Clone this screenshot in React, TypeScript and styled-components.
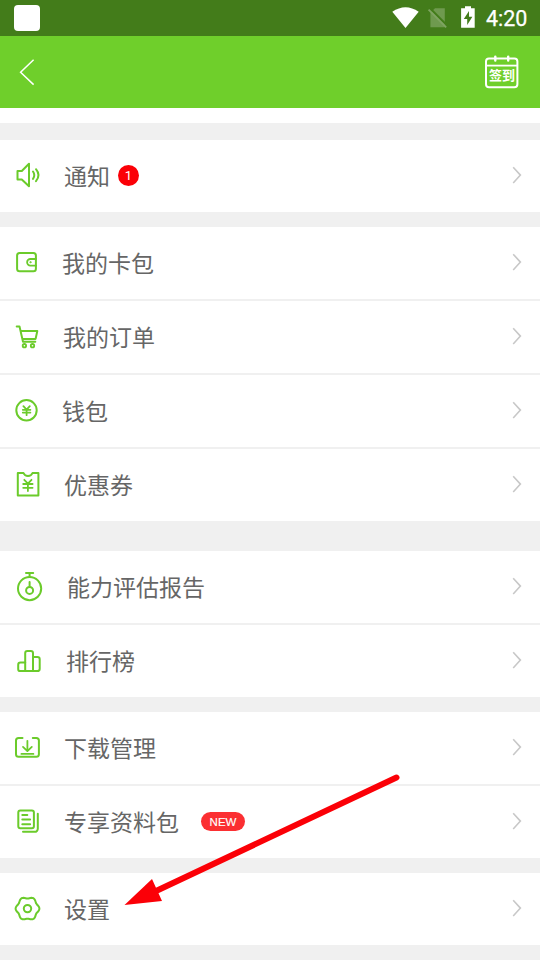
import React from 'react';
import styled, { createGlobalStyle } from 'styled-components';

const GlobalStyle = createGlobalStyle`
  * { box-sizing: border-box; }
  body {
    margin: 0;
    background: #f0f0f0;
    font-family: "Noto Sans CJK SC", sans-serif;
  }
`;

const Screen = styled.div`
  position: relative;
  display: flex;
  flex-direction: column;
  width: 540px;
  height: 960px;
  overflow: hidden;
  background: #f0f0f0;
`;

const StatusBar = styled.div`
  display: flex;
  align-items: center;
  justify-content: space-between;
  flex: none;
  height: 36px;
  padding: 0 12px 0 14px;
  background: #437c1a;
`;

const AppBadge = styled.div`
  width: 26px;
  height: 26px;
  border-radius: 4px;
  background: #fff;
`;

const StatusGroup = styled.div`
  display: flex;
  align-items: center;
  height: 36px;
`;

const Clock = styled.span`
  width: 42px;
  margin-left: 10px;
  padding-top: 2px;
  font: 400 21.5px/34px Roboto, sans-serif;
  color: #fff;
  -webkit-text-stroke: 0.25px #fff;
  white-space: nowrap;
`;

const Header = styled.header`
  display: flex;
  align-items: center;
  justify-content: space-between;
  flex: none;
  height: 72px;
  padding: 0 20px 0 18px;
  background: #6fcf2b;
`;

const CheckIn = styled.div`
  position: relative;
  width: 36px;
  height: 36px;
`;

const CheckInText = styled.span`
  position: absolute;
  left: 5px;
  top: 13px;
  width: 26px;
  font-size: 13px;
  font-weight: 700;
  line-height: 16px;
  color: #fff;
  white-space: nowrap;
`;

const Strip = styled.div`
  flex: none;
  height: 15px;
  background: #fff;
`;

const Group = styled.section<{ $gap: number }>`
  display: flex;
  flex-direction: column;
  flex: none;
  gap: 2px;
  margin-top: ${(p) => p.$gap}px;
`;

const Row = styled.div`
  display: flex;
  align-items: center;
  height: 72px;
  padding-right: 16px;
  background: #fff;
`;

const RowIcon = styled.svg`
  flex: none;
  display: block;
  width: 50px;
  height: 72px;
  fill: none;
  stroke: #6bcb2b;
  stroke-width: 2;
  stroke-linecap: round;
  stroke-linejoin: round;
`;

const Label = styled.span<{ $indent: number }>`
  margin-left: ${(p) => p.$indent}px;
  padding-bottom: 3px;
  font-size: 23px;
  line-height: 34px;
  font-weight: 400;
  color: #666;
  white-space: nowrap;
`;

const CountBadge = styled.span`
  width: 21px;
  height: 21px;
  margin: 0 0 1px 8px;
  border-radius: 50%;
  background: #fb0007;
  color: #fff;
  font: 400 13px/22px Roboto, sans-serif;
  text-align: center;
`;

const NewBadge = styled.span`
  width: 44px;
  height: 19px;
  margin: 0 0 1px 22px;
  border-radius: 10px;
  background: #fb2f32;
  color: #fff;
  font: 400 11.5px/20px "Liberation Sans", sans-serif;
  -webkit-text-stroke: 0.15px #fff;
  text-align: center;
`;

const Chevron = styled.svg`
  flex: none;
  width: 12px;
  height: 20px;
  margin: 0 0 2px auto;
  fill: none;
  stroke: #c8c8c8;
  stroke-width: 1.6;
`;

const Pointer = styled.svg`
  position: absolute;
  left: 120px;
  top: 770px;
  width: 284px;
  height: 140px;
  pointer-events: none;
`;

// Six-lobed gear outline with one lobe pointing left and one pointing right.
const gearPath =
  Array.from({ length: 72 }, (_, i) => {
    const angle = (i * Math.PI) / 36;
    const radius = 11 + 0.9 * Math.cos(6 * angle);
    const x = 27.5 + radius * Math.cos(angle);
    const y = 35.6 + radius * Math.sin(angle);
    return `${i ? 'L' : 'M'}${x.toFixed(2)} ${y.toFixed(2)}`;
  }).join('') + 'z';

const icons = {
  notice: (
    <>
      <path d="M17.5 31h4.3l7.2-7.2v22.4l-7.2-6.7h-4.3z" />
      <path d="M33 31.5q2.6 3.8 0 7.4M36 29.2q5 6 0 12" />
    </>
  ),
  card: (
    <>
      <rect x="17.1" y="26" width="18.8" height="18.2" rx="2.5" />
      <path d="M36 32h-5.6a3.3 3.3 0 0 0 0 6.6H36" strokeWidth="1.8" />
      <circle cx="30.4" cy="35.2" r=".6" strokeWidth="1" />
    </>
  ),
  order: (
    <>
      <path d="M16.7 25.4h2.8L23 40.8h12.3M20.7 30h16.6l-1.7 7.9H22.4" />
      <circle cx="24.4" cy="44.7" r="1.7" strokeWidth="1.8" />
      <circle cx="32.5" cy="44.7" r="1.7" strokeWidth="1.8" />
    </>
  ),
  wallet: (
    <>
      <circle cx="26.5" cy="35.3" r="10.2" />
      <path d="M23.4 31.2l3.2 3.4 3.2-3.4M22.8 34.8h7.6M22.8 37.6h7.6M26.6 34.8v5.4" strokeWidth="1.8" />
    </>
  ),
  coupon: (
    <>
      <path d="M17.8 24h5.7q1.2 3 4.5 3t4.5-3h5.9v22.6H17.8z" />
      <path d="M24.3 30.8l3.6 3.8 3.6-3.8M23.2 35h9.4M23.2 38.8h9.4M27.9 35v7" strokeWidth="1.8" />
    </>
  ),
  report: (
    <>
      <circle cx="29.6" cy="37.6" r="11.6" />
      <circle cx="29.6" cy="39.4" r="3.5" />
      <path d="M26 22.1h7.2M29.6 22.5v3M29.6 31v4.5" />
    </>
  ),
  rank: (
    <>
      <path d="M25.2 46.1v-18a2.2 2.2 0 0 1 2.2-2.2h3.4a2.2 2.2 0 0 1 2.2 2.2v18" />
      <path d="M25.2 37.6h-4.7a2.3 2.3 0 0 0-2.3 2.3v4a2.2 2.2 0 0 0 2.2 2.2h17a2.3 2.3 0 0 0 2.3-2.2V34.2a2.3 2.3 0 0 0-2.3-2.3H33" />
    </>
  ),
  download: (
    <>
      <path d="M22.5 25.9h-3.9a2.6 2.6 0 0 0-2.6 2.6v13.7a2.6 2.6 0 0 0 2.6 2.6h17.7a2.6 2.6 0 0 0 2.6-2.6V28.5a2.6 2.6 0 0 0-2.6-2.6h-3.5" />
      <path d="M27.4 28.8v10M23 34.9l4.4 4.2 4.4-4.2M21.4 41.9h12" strokeWidth="1.8" />
    </>
  ),
  docs: (
    <>
      <rect x="18.3" y="24.6" width="15.6" height="17.7" rx="2" />
      <path d="M37.8 27.8v15a3 3 0 0 1-3 3H23" />
      <path d="M22.3 28.9h5M22.3 33.6h7.8M22.3 38.3h7.8" />
    </>
  ),
  settings: (
    <>
      <path d={gearPath} />
      <circle cx="27.5" cy="35.6" r="3.7" />
    </>
  ),
};

interface Item {
  icon: keyof typeof icons;
  label: string;
  indent: number;
  count?: number;
  tag?: string;
}

const groups: { gap: number; items: Item[] }[] = [
  { gap: 17, items: [{ icon: 'notice', label: '通知', indent: 14, count: 1 }] },
  {
    gap: 15,
    items: [
      { icon: 'card', label: '我的卡包', indent: 12 },
      { icon: 'order', label: '我的订单', indent: 13 },
      { icon: 'wallet', label: '钱包', indent: 12 },
      { icon: 'coupon', label: '优惠券', indent: 14 },
    ],
  },
  {
    gap: 30,
    items: [
      { icon: 'report', label: '能力评估报告', indent: 17 },
      { icon: 'rank', label: '排行榜', indent: 16 },
    ],
  },
  {
    gap: 15,
    items: [
      { icon: 'download', label: '下载管理', indent: 14 },
      { icon: 'docs', label: '专享资料包', indent: 14, tag: 'NEW' },
    ],
  },
  { gap: 15, items: [{ icon: 'settings', label: '设置', indent: 14 }] },
];

export default function App() {
  return (
    <Screen>
      <GlobalStyle />
      <StatusBar>
        <AppBadge />
        <StatusGroup>
          <svg width="84" height="36" viewBox="392 0 84 36">
            <path d="M392.3 11.8Q405.5 2.6 418.7 11.8L405.5 28z" fill="#fff" />
            <path d="M435 8.3h9.8v18.9h-14.4V12.8z" fill="#6f9a4f" />
            <path d="M430 8.2l17.6 17.8" stroke="#437c1a" strokeWidth="2" />
            <path d="M428.6 9.6l17.6 17.8" stroke="#7fa462" strokeWidth="1.8" />
            <path
              fill="#fff"
              fillRule="evenodd"
              d="M465 6.2h6v2.1h3.7v19.4h-13.6V8.3h3.9zM469 11l-5.2 8h3.4v6l5.2-8.2H469z"
            />
          </svg>
          <Clock>4:20</Clock>
        </StatusGroup>
      </StatusBar>
      <Header>
        <svg width="20" height="30" viewBox="0 0 20 30" fill="none" stroke="#fff" strokeWidth="1.5">
          <path d="M15.6 2.8L2.6 15.3l13 12.3" />
        </svg>
        <CheckIn>
          <svg width="36" height="36" viewBox="0 0 36 36" fill="none" stroke="#fff" strokeWidth="2">
            <rect x="2" y="4.4" width="31.4" height="28.8" rx="3" />
            <path d="M2 11.6h31.4" strokeWidth="1.8" />
            <path d="M11.3 2.6v4M24.2 2.6v4" strokeWidth="2.4" strokeLinecap="round" />
          </svg>
          <CheckInText>签到</CheckInText>
        </CheckIn>
      </Header>
      <Strip />
      {groups.map((group) => (
        <Group key={group.items[0].icon} $gap={group.gap}>
          {group.items.map((item) => (
            <Row key={item.icon}>
              <RowIcon viewBox="0 0 50 72">{icons[item.icon]}</RowIcon>
              <Label $indent={item.indent}>{item.label}</Label>
              {item.count && <CountBadge>{item.count}</CountBadge>}
              {item.tag && <NewBadge>{item.tag}</NewBadge>}
              <Chevron viewBox="0 0 12 20">
                <path d="M1.2 2.2l7.2 7.9-7.2 7.9" />
              </Chevron>
            </Row>
          ))}
        </Group>
      ))}
      <Pointer viewBox="120 770 284 140">
        <path d="M396.5 777.5L155 891.5" stroke="#fb0007" strokeWidth="6" strokeLinecap="round" />
        <path d="M124.5 905L152 879l10 22z" fill="#fb0007" />
      </Pointer>
    </Screen>
  );
}
